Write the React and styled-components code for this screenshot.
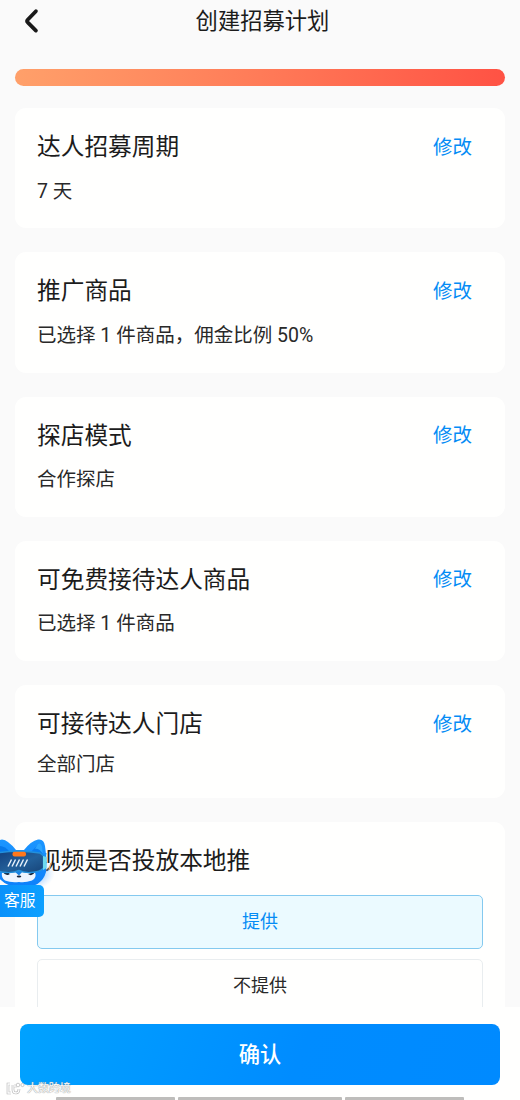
import React, { useState } from "react";
import styled, { createGlobalStyle } from "styled-components";

const GlobalStyle = createGlobalStyle`
  * {
    box-sizing: border-box;
  }

  body {
    margin: 0;
    font-family: Roboto, "Noto Sans CJK SC", sans-serif;
    color: #1c1c1c;
    background-color: #fafafa;
  }
`;

const AppContainer = styled.div`
  position: relative;
  display: flex;
  flex-direction: column;
  width: 520px;
  height: 1100px;
  overflow: hidden;
  background-color: #fafafa;
`;

const Header = styled.div`
  display: grid;
  grid-template-columns: 60px 1fr 60px;
  align-items: center;
  flex: none;
  height: 42px;
`;

const BackButton = styled.button`
  display: flex;
  padding: 0 0 0 22px;
  border: none;
  background: none;
  cursor: pointer;
`;

const PageTitle = styled.div`
  padding-left: 5px;
  text-align: center;
  font-size: 22.3px;
  line-height: 40px;
`;

const Content = styled.div`
  flex: 1;
  min-height: 0;
  padding: 26.5px 15px 0;
  overflow: hidden;
`;

const ProgressBar = styled.div`
  height: 17.5px;
  margin-bottom: 22.3px;
  border-radius: 9px;
  background: linear-gradient(90deg, #ffa06a 0%, #ff7b58 50%, #ff5244 100%);
`;

const CardList = styled.div`
  display: flex;
  flex-direction: column;
  gap: 24px;
`;

const Card = styled.div`
  height: ${(props) => props.$height || "120.2px"};
  padding: 22px 22px 0;
  border-radius: 11px;
  background-color: #fffffe;
`;

const CardHeader = styled.div`
  display: flex;
  justify-content: space-between;
  align-items: center;
  height: 35px;
  padding-right: 11px;
`;

const CardTitle = styled.div`
  font-size: 23.7px;
  line-height: 35px;
  white-space: nowrap;
`;

const EditButton = styled.button`
  padding: 0;
  border: none;
  background: none;
  color: #058cf5;
  font-family: inherit;
  font-size: 19.5px;
  line-height: 30px;
  cursor: pointer;
`;

const CardValue = styled.div`
  margin-top: ${(props) => (props.$tight ? "8px" : "11.5px")};
  font-size: 19.5px;
  line-height: 29px;
  color: #292929;
`;

const Options = styled.div`
  display: flex;
  flex-direction: column;
  gap: 10.5px;
  margin-top: 15.5px;
`;

const OptionButton = styled.button`
  height: 54px;
  padding: 0 0 4px;
  border: 1px solid ${(props) => (props.$active ? "#84c9ef" : "#e9edef")};
  border-radius: 5px;
  background-color: ${(props) => (props.$active ? "#ebfaff" : "#fffffe")};
  color: ${(props) => (props.$active ? "#058cf5" : "#292929")};
  font-family: inherit;
  font-size: 18px;
  cursor: pointer;
`;

const Footer = styled.div`
  display: flex;
  flex-direction: column;
  flex: none;
  height: 93px;
  padding: 16.5px 20px 0;
  background-color: #fffffe;
`;

const ConfirmButton = styled.button`
  flex: none;
  height: 61px;
  padding: 0 0 4px;
  border: none;
  border-radius: 8px;
  background: linear-gradient(110deg, #00a2ff 0%, #008cff 58%, #008aff 100%);
  color: white;
  font-family: inherit;
  font-size: 21.3px;
  font-weight: 500;
  cursor: pointer;
`;

const BottomBars = styled.div`
  display: grid;
  grid-template-columns: 119px 164px 119px;
  gap: 3px;
  margin: 12.5px 0 0 36px;
`;

const Bar = styled.div`
  height: 3px;
  border-radius: 1px 1px 0 0;
  background-color: #bebdbb;
`;

const ServiceBadge = styled.div`
  position: absolute;
  left: 0;
  top: 836px;
  width: 56px;
`;

const Mascot = styled.svg`
  display: block;
  width: 56px;
  height: 54px;
`;

const ServiceLabel = styled.div`
  position: relative;
  width: 44px;
  height: 32px;
  margin-top: -5.5px;
  padding-left: 4px;
  border-radius: 0 5px 5px 0;
  background: linear-gradient(90deg, #0a91fa, #0ca0ff);
  color: white;
  font-size: 15.8px;
  line-height: 32px;
`;

const Watermark = styled.div`
  position: absolute;
  left: 6px;
  top: 1081px;
  display: flex;
  align-items: center;
  gap: 2px;
  color: #fdfdfd;
  font-size: 11px;
  line-height: 15px;
  letter-spacing: -0.1px;
  text-shadow: 0 0 1px #8f8f8f, 0 0 1px #a5a5a5;
`;

const cards = [
  { title: "达人招募周期", value: "7 天" },
  { title: "推广商品", value: "已选择 1 件商品，佣金比例 50%" },
  { title: "探店模式", value: "合作探店" },
  { title: "可免费接待达人商品", value: "已选择 1 件商品" },
  { title: "可接待达人门店", value: "全部门店", tight: true },
];

const MascotIcon = () => (
  <Mascot viewBox="0 0 56 54">
    <defs>
      <linearGradient id="fur" x1="0" y1="0" x2="0" y2="1">
        <stop offset="0" stopColor="#1c96ff" />
        <stop offset="1" stopColor="#0d80fa" />
      </linearGradient>
      <linearGradient id="visor" x1="0" y1="0" x2="1" y2="1">
        <stop offset="0" stopColor="#123f7e" />
        <stop offset="0.55" stopColor="#23609a" />
        <stop offset="1" stopColor="#174478" />
      </linearGradient>
      <radialGradient id="glow">
        <stop offset="0.6" stopColor="#77b9ff" stopOpacity="0.5" />
        <stop offset="1" stopColor="#a9d2ff" stopOpacity="0" />
      </radialGradient>
    </defs>
    <ellipse cx="27" cy="37" rx="28" ry="18" fill="url(#glow)" />
    {/* ears and head */}
    <path
      d="M-5 18 Q-4 4 2 3.5 Q8 4 16 14 L24 14 Q31 5 38 3.5 Q44 2.5 45 10 L46.5 22 L46 36 Q42 51 22 52 Q2 51 -5 36 Z"
      fill="url(#fur)"
    />
    <path d="M0 10 Q5 10 10 16 L0 18 Z" fill="#0779ea" />
    <path d="M31 16 Q36 10 41 8 L43 18 Z" fill="#0a7cee" />
    <path d="M38 8 Q42 6 42.5 14 L43 18 Q39 12 35 13 Z" fill="#2ba5ff" />
    {/* face */}
    <path
      d="M2 36 L35 36 Q37 42 32 44.5 Q25 47 19 46 Q11 47 5 44.5 Q1 42 2 36 Z"
      fill="#eef5ff"
    />
    <path d="M14 35 L23 35 L19 39.5 Z" fill="#1782e5" />
    <path d="M3 36 Q5 40 9.5 38.5 L9 36 Z" fill="#111d31" />
    <path d="M28 38 Q32 41 35 36 Z" fill="#111d31" />
    <ellipse cx="19" cy="40.5" rx="2.3" ry="1.1" fill="#18263d" />
    {/* visor */}
    <path
      d="M-3 17 Q18 13.5 40 17 L43.5 20 L43.5 32 Q40 36 31 36.5 Q24 37 19 34.5 Q14 37 6 36.5 Q0 36 -3 34 Z"
      fill="url(#visor)"
      stroke="#2290dc"
      strokeWidth="1.4"
    />
    <path d="M43 20 L46.5 21 L46.5 32 L43 34 Z" fill="#6bdaef" />
    <path d="M49 34 L51 27" stroke="#e3a35e" strokeWidth="1.2" />
    <rect x="12.5" y="15.8" width="13.5" height="4.8" rx="2" fill="#ff781c" />
    <path
      d="M8 30.5 L11.5 23.5 M12 30.5 L15.5 23.5 M16 30.5 L19.5 23.5 M20 30.5 L23.5 23.5 M24 30.5 L27.5 23.5"
      stroke="#e9f2fb"
      strokeWidth="1.4"
    />
  </Mascot>
);

const App = () => {
  const [provide, setProvide] = useState(true);

  return (
    <AppContainer>
      <GlobalStyle />
      <Header>
        <BackButton aria-label="返回">
          <svg width="18" height="26" viewBox="0 0 18 26" fill="none">
            <path
              d="M13.9 3.2 L5.7 11.7 Q4.5 13 5.7 14.3 L13.9 22.6"
              stroke="#191919"
              strokeWidth="3.8"
              strokeLinecap="round"
              strokeLinejoin="round"
            />
          </svg>
        </BackButton>
        <PageTitle>创建招募计划</PageTitle>
      </Header>
      <Content>
        <ProgressBar />
        <CardList>
          {cards.map((card) => (
            <Card key={card.title} $height={card.tight && "113px"}>
              <CardHeader>
                <CardTitle>{card.title}</CardTitle>
                <EditButton>修改</EditButton>
              </CardHeader>
              <CardValue $tight={card.tight}>{card.value}</CardValue>
            </Card>
          ))}
          <Card $height="220px">
            <CardHeader>
              <CardTitle>视频是否投放本地推</CardTitle>
            </CardHeader>
            <Options>
              <OptionButton $active={provide} onClick={() => setProvide(true)}>
                提供
              </OptionButton>
              <OptionButton $active={!provide} onClick={() => setProvide(false)}>
                不提供
              </OptionButton>
            </Options>
          </Card>
        </CardList>
      </Content>
      <Footer>
        <ConfirmButton>确认</ConfirmButton>
        <BottomBars>
          <Bar />
          <Bar />
          <Bar />
        </BottomBars>
      </Footer>
      <ServiceBadge>
        <MascotIcon />
        <ServiceLabel>客服</ServiceLabel>
      </ServiceBadge>
      <Watermark>
        <svg width="19" height="13" viewBox="0 0 19 13" fill="none">
          <path
            d="M4 2 H2 V11 H5 M7 3 V8 Q7 11 10 11 Q13 11 13 7 M8 4 H11"
            stroke="#b5b5b5"
            strokeWidth="2.6"
          />
          <path
            d="M4 2 H2 V11 H5 M7 3 V8 Q7 11 10 11 Q13 11 13 7 M8 4 H11"
            stroke="#fff"
            strokeWidth="1.3"
          />
          <circle cx="12" cy="3" r="1.8" fill="#fff" stroke="#b5b5b5" strokeWidth="0.7" />
          <circle cx="16.5" cy="3" r="1.6" fill="#fff" stroke="#b5b5b5" strokeWidth="0.7" />
        </svg>
        <span>大数跨境</span>
      </Watermark>
    </AppContainer>
  );
};

export default App;
